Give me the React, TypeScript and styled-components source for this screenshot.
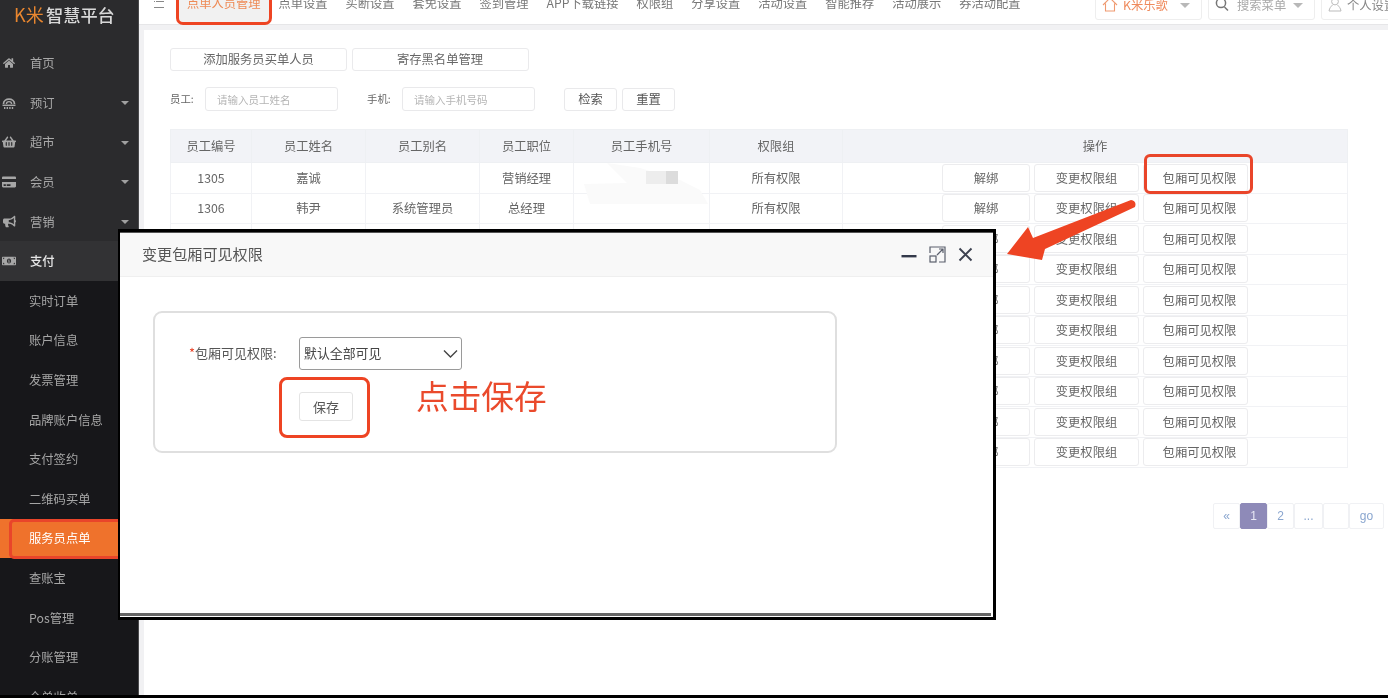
import React from "react";
import styled, { createGlobalStyle } from "styled-components";
import { FaHome, FaShoppingBasket, FaCreditCard, FaBullhorn, FaMoneyBillAlt } from "react-icons/fa";

const Global = createGlobalStyle`
  html, body { margin: 0; padding: 0; background: #fff; }
  *, *::before, *::after { box-sizing: border-box; }
`;

const CJK = `"Noto Sans CJK SC", "Liberation Sans", sans-serif`;

const Screen = styled.div`
  position: relative;
  width: 1388px;
  height: 698px;
  overflow: hidden;
  display: flex;
  background: #fff;
  font-family: ${CJK};
  font-size: 12.3px;
  color: #666;
  filter: blur(0.45px);
`;

const Bottom = styled.div`
  position: absolute;
  left: 0;
  right: 0;
  bottom: 0;
  height: 3px;
  background: #000;
`;

/* ---------- sidebar ---------- */
const Sidebar = styled.aside`
  flex: 0 0 139px;
  height: 100%;
  overflow: hidden;
  background: #2b2b2d;
  border-right: 1px solid #4a4a4c;
`;

const Logo = styled.div`
  height: 43.4px;
  padding: 1px 0 0 14px;
  display: flex;
  align-items: flex-start;
  line-height: 27px;
`;

const LogoMark = styled.span`
  color: #e8862f;
  font-size: 18px;
  font-weight: 400;
  width: 32px;
  letter-spacing: 0;
  white-space: nowrap;
`;

const LogoName = styled.span`
  color: #d8d8d8;
  font-size: 17.2px;
  font-weight: 500;
`;

const Item = styled.div<{ $open?: boolean }>`
  position: relative;
  height: 39.6px;
  display: flex;
  align-items: center;
  color: ${(p) => (p.$open ? "#e6e6e6" : "#a9a9a9")};
  background: ${(p) => (p.$open ? "#323234" : "transparent")};
  font-weight: ${(p) => (p.$open ? 500 : 400)};
`;

const ItemIcon = styled.span`
  flex: 0 0 30px;
  display: flex;
  justify-content: center;
  padding-right: 12px;
  color: #a6a6a6;
`;

const Caret = styled.i`
  position: absolute;
  right: 9px;
  top: 18px;
  border-left: 4.5px solid transparent;
  border-right: 4.5px solid transparent;
  border-top: 4.5px solid #a0a0a0;
`;

const SubMenu = styled.div`
  background: #17171a;
`;

const SubItem = styled.div<{ $active?: boolean }>`
  position: relative;
  height: 39.6px;
  padding-left: 29px;
  display: flex;
  align-items: center;
  color: ${(p) => (p.$active ? "#fff" : "#a6a6a6")};
  background: ${(p) => (p.$active ? "#ef722c" : "transparent")};
  &::after {
    content: "";
    display: ${(p) => (p.$active ? "block" : "none")};
    position: absolute;
    left: 9px;
    top: 0;
    width: 120px;
    height: 40px;
    border: 3px solid #e9452a;
    border-radius: 5px;
  }
`;

/* ---------- header ---------- */
const Main = styled.main`
  flex: 1;
  min-width: 0;
  height: 100%;
  display: flex;
  flex-direction: column;
  background: #f1f1f3;
`;

const Header = styled.header`
  flex: 0 0 25px;
  height: 25px;
  background: #fff;
  border-bottom: 1px solid #e6e6e8;
  display: flex;
  align-items: flex-start;
  padding-left: 14px;
  line-height: 20px;
  isolation: isolate;
`;

const MenuToggle = styled.svg`
  flex: 0 0 12px;
  width: 12px;
  height: 9px;
  margin: 0 22px 0 0;
`;

const Tabs = styled.nav`
  display: flex;
  gap: 18px;
  margin-top: -7px;
  font-size: 12.25px;
  color: #777;
  white-space: nowrap;
`;

const Tab = styled.span<{ $active?: boolean }>`
  position: relative;
  color: ${(p) => (p.$active ? "#ee8a55" : "#777")};
  &::before {
    content: "";
    display: ${(p) => (p.$active ? "block" : "none")};
    position: absolute;
    z-index: -1;
    left: -11px;
    right: -11px;
    top: -6px;
    bottom: -12px;
    background: #f1f1f1;
    border: 3px solid #ee4423;
    border-radius: 0 0 7px 7px;
  }
`;

const Tools = styled.div`
  margin-left: auto;
  margin-right: -20px;
  display: flex;
  gap: 6px;
  flex-shrink: 0;
  white-space: nowrap;
`;

const Tool = styled.div<{ $w: number; $tone: string }>`
  position: relative;
  width: ${(p) => p.$w}px;
  height: 31px;
  margin-top: -11px;
  padding: 7px 0 0 6px;
  border: 1px solid #eeeeee;
  border-radius: 3px;
  display: flex;
  align-items: flex-start;
  gap: 5px;
  color: ${(p) => p.$tone};
  line-height: 16px;
`;

const ToolCaret = styled.i`
  position: absolute;
  right: 11px;
  top: 13px;
  border-left: 5px solid transparent;
  border-right: 5px solid transparent;
  border-top: 5px solid #b8b8b8;
`;

const SearchGlyph = styled.svg`
  margin-right: 3px;
`;

/* ---------- content ---------- */
const Content = styled.section`
  flex: 1;
  margin: 5px 0 0 5px;
  background: #fff;
  padding: 17.5px 4px 0 26px;
`;

const ActionRow = styled.div`
  display: flex;
  gap: 4.5px;
`;

const WideButton = styled.div`
  width: 177px;
  height: 23px;
  border: 1px solid #eaeaec;
  border-radius: 3px;
  display: flex;
  align-items: center;
  justify-content: center;
  color: #666;
`;

const FilterRow = styled.div`
  display: flex;
  align-items: center;
  margin-top: 16.5px;
  height: 24px;
`;

const FilterLabel = styled.label<{ $gap?: number }>`
  margin-left: ${(p) => p.$gap ?? 0}px;
  width: 35px;
  font-size: 10.4px;
  color: #666;
  padding-bottom: 2px;
`;

const TextBox = styled.div`
  width: 133px;
  height: 24px;
  border: 1px solid #e9e9eb;
  border-radius: 3px;
  padding-left: 11px;
  font-size: 10.5px;
  color: #b5b5b5;
  display: flex;
  align-items: center;
`;

const SmallButton = styled.div<{ $gap: number }>`
  margin-left: ${(p) => p.$gap}px;
  width: 53px;
  height: 23px;
  border: 1px solid #e9e9eb;
  border-radius: 3px;
  display: flex;
  align-items: center;
  justify-content: center;
  color: #555;
`;

const Table = styled.table`
  margin-top: 18px;
  width: 1178px;
  table-layout: fixed;
  border-collapse: collapse;
  color: #666;
`;

const Th = styled.th<{ $w?: number }>`
  width: ${(p) => (p.$w ? `${p.$w}px` : "auto")};
  height: 33px;
  padding: 0;
  background: #f2f3f7;
  border: 1px solid #eef0f3;
  font-weight: 400;
  text-align: center;
`;

const Td = styled.td`
  height: 30.5px;
  padding: 0;
  border: 1px solid #f1f2f5;
  text-align: center;
`;

const Ops = styled.div`
  display: flex;
  justify-content: center;
  gap: 4px;
`;

const OpButton = styled.span<{ $w: number; $inset?: number }>`
  width: ${(p) => p.$w}px;
  height: 28px;
  padding-left: ${(p) => p.$inset ?? 0}px;
  border: 1px solid #ececee;
  border-radius: 3px;
  background: #fff;
  display: flex;
  align-items: center;
  justify-content: center;
`;

const Pager = styled.div`
  display: flex;
  justify-content: flex-end;
  margin-top: 35px;
`;

const PageItem = styled.span<{ $w: number; $on?: boolean }>`
  width: ${(p) => p.$w}px;
  height: 26px;
  border: 1px solid ${(p) => (p.$on ? "#8e8ab8" : "#f0f1f4")};
  border-radius: 2px;
  background: ${(p) => (p.$on ? "#8e8ab8" : "#fff")};
  color: ${(p) => (p.$on ? "#e8e8f4" : "#8aa6cf")};
  font-family: "Liberation Sans", sans-serif;
  font-size: 12px;
  display: flex;
  align-items: center;
  justify-content: center;
`;

/* ---------- modal ---------- */
const Modal = styled.div`
  position: absolute;
  left: 118px;
  top: 229px;
  width: 878px;
  height: 391px;
  border: solid #000;
  border-width: 3px 3px 3px 2px;
  background: #fff;
  display: flex;
  flex-direction: column;
`;

const ModalHead = styled.div`
  flex: 0 0 45px;
  background: #f8f8f8;
  border-top: 1px solid #555;
  border-bottom: 1px solid #efefef;
  padding: 0 20px 0 22px;
  display: flex;
  align-items: center;
  font-size: 15.1px;
  color: #555;
`;

const ModalTitle = styled.span`
  margin-top: -3px;
`;

const ModalTools = styled.div`
  margin-left: auto;
  display: flex;
  align-items: center;
  gap: 12px;
  color: #33394a;
`;

const ModalBody = styled.div`
  flex: 1;
  padding: 34px 0 0 33px;
`;

const Card = styled.div`
  width: 684px;
  height: 142px;
  border: 2px solid #dfdfdf;
  border-radius: 9px;
  padding-top: 24px;
`;

const FieldRow = styled.div`
  display: flex;
  align-items: center;
  padding-left: 34px;
  font-size: 13px;
  color: #555;
`;

const FieldLabel = styled.span`
  width: 110px;
  margin-top: -2px;
  b {
    color: #e9452a;
    font-weight: 400;
  }
`;

const Picker = styled.div`
  width: 163px;
  height: 33px;
  border: 1px solid #9a9a9a;
  border-radius: 3px;
  padding: 0 2px 0 4px;
  display: flex;
  align-items: center;
  justify-content: space-between;
  color: #444;
`;

const PickerText = styled.span`
  font-size: 12.9px;
  margin-top: -2px;
`;

const SaveRow = styled.div`
  display: flex;
  align-items: flex-start;
  margin: 7px 0 0 124px;
`;

const SaveBox = styled.div`
  width: 91px;
  height: 61px;
  border: 3.5px solid #ee4423;
  border-radius: 8px;
  padding: 0 0 3px 3px;
  display: flex;
  align-items: center;
  justify-content: center;
`;

const SaveButton = styled.div`
  width: 54px;
  height: 29px;
  border: 1px solid #e4e4e4;
  border-radius: 3px;
  display: flex;
  align-items: center;
  justify-content: center;
  color: #555;
  font-size: 13px;
`;

const SaveHint = styled.div`
  margin: -6px 0 0 46px;
  font-size: 32.7px;
  line-height: 48px;
  font-weight: 400;
  color: #ea4a2c;
  white-space: nowrap;
`;

const ModalFoot = styled.div`
  flex: 0 0 3px;
  margin: 0 2px 1px 0;
  background: #666;
`;

/* ---------- annotations ---------- */
const Callout = styled.div`
  position: absolute;
  left: 1144px;
  top: 154px;
  width: 109px;
  height: 40px;
  border: 3px solid #e9452a;
  border-radius: 6px;
`;

const Overlay = styled.svg`
  position: absolute;
  left: 0;
  top: 0;
  pointer-events: none;
`;

/* ---------- data ---------- */
const Reserve = () => (
  <svg width="14" height="14" viewBox="0 0 14 14" fill="none" stroke="currentColor">
    <path d="M1.5 8 C1.5 1.6 12.5 1.6 12.5 8" strokeWidth="1.7" />
    <path d="M4.4 8 C4.4 4.8 9.6 4.8 9.6 8" strokeWidth="1.4" />
    <path d="M0.5 9.3 H13.5" strokeWidth="1.5" />
    <path d="M2 12 H12" strokeWidth="1.8" strokeDasharray="1.4 1.2" />
  </svg>
);

const top = [
  { t: "首页", icon: <FaHome size={12} /> },
  { t: "预订", icon: <Reserve />, caret: true },
  { t: "超市", icon: <FaShoppingBasket size={14} />, caret: true },
  { t: "会员", icon: <FaCreditCard size={14} />, caret: true },
  { t: "营销", icon: <FaBullhorn size={13} />, caret: true },
];
const subs = ["实时订单", "账户信息", "发票管理", "品牌账户信息", "支付签约", "二维码买单", "服务员点单", "查账宝", "Pos管理", "分账管理", "全单收单"];
const tabs = ["点单人员管理", "点单设置", "买断设置", "套免设置", "签到管理", "APP下载链接", "权限组", "分享设置", "活动设置", "智能推荐", "活动展示", "券活动配置"];
const heads: [string, number?][] = [["员工编号", 81], ["员工姓名", 114], ["员工别名", 114], ["员工职位", 94], ["员工手机号", 136], ["权限组", 133], ["操作"]];
const rows = [
  ["1305", "嘉诚", "", "营销经理", "", "所有权限"],
  ["1306", "韩尹", "系统管理员", "总经理", "", "所有权限"],
  ...Array.from({ length: 8 }, () => ["", "", "", "", "", ""]),
];
const pages: [string, number, boolean?][] = [["«", 27], ["1", 27, true], ["2", 27], ["...", 29], ["", 26], ["go", 35]];

export default function App() {
  return (
    <Screen>
      <Global />
      <Sidebar>
        <Logo>
          <LogoMark>K米</LogoMark>
          <LogoName>智慧平台</LogoName>
        </Logo>
        {top.map((m) => (
          <Item key={m.t}>
            <ItemIcon>{m.icon}</ItemIcon>
            {m.t}
            {m.caret && <Caret />}
          </Item>
        ))}
        <Item $open>
          <ItemIcon><FaMoneyBillAlt size={14} /></ItemIcon>
          支付
        </Item>
        <SubMenu>
          {subs.map((s) => (
            <SubItem key={s} $active={s === "服务员点单"}>{s}</SubItem>
          ))}
        </SubMenu>
      </Sidebar>

      <Main>
        <Header>
          <MenuToggle viewBox="0 0 12 9" fill="none" stroke="#888" strokeWidth="1.1">
            <path d="M3 1.5 H11 M1 1.5 H2 M1 7.5 H11" />
          </MenuToggle>
          <Tabs>
            {tabs.map((t, i) => (
              <Tab key={t} $active={i === 0}>{t}</Tab>
            ))}
          </Tabs>
          <Tools>
            <Tool $w={107} $tone="#ef8a5c">
              <svg width="16" height="15" viewBox="0 0 16 15" fill="none" stroke="#ef9a70" strokeWidth="1.1">
                <path d="M1 8 L8 1 L15 8 M3.5 6.5 V14 H12.5 V6.5" />
              </svg>
              K米乐歌
              <ToolCaret />
            </Tool>
            <Tool $w={107} $tone="#aaaaaa">
              <SearchGlyph width="14" height="15" viewBox="0 0 14 15" fill="none" stroke="#777" strokeWidth="1.5">
                <circle cx="6" cy="6" r="4.6" />
                <path d="M9.5 10 L13 13.5" />
              </SearchGlyph>
              搜索菜单
              <ToolCaret />
            </Tool>
            <Tool $w={87} $tone="#888888">
              <svg width="14" height="15" viewBox="0 0 14 15" fill="none" stroke="#bbb" strokeWidth="1">
                <circle cx="7" cy="4.5" r="3.4" />
                <path d="M4.5 8 C3 9.5 1.5 11 1 14 H13 C12.5 11 11 9.5 9.5 8" />
              </svg>
              个人设置
            </Tool>
          </Tools>
        </Header>

        <Content>
          <ActionRow>
            <WideButton>添加服务员买单人员</WideButton>
            <WideButton>寄存黑名单管理</WideButton>
          </ActionRow>
          <FilterRow>
            <FilterLabel>员工:</FilterLabel>
            <TextBox>请输入员工姓名</TextBox>
            <FilterLabel $gap={29}>手机:</FilterLabel>
            <TextBox>请输入手机号码</TextBox>
            <SmallButton $gap={29}>检索</SmallButton>
            <SmallButton $gap={5}>重置</SmallButton>
          </FilterRow>
          <Table>
            <thead>
              <tr>
                {heads.map(([h, w]) => (
                  <Th key={h} $w={w}>{h}</Th>
                ))}
              </tr>
            </thead>
            <tbody>
              {rows.map((r, i) => (
                <tr key={i}>
                  {r.map((c, j) => (
                    <Td key={j}>{c}</Td>
                  ))}
                  <Td>
                    <Ops>
                      <OpButton $w={88}>解绑</OpButton>
                      <OpButton $w={105}>变更权限组</OpButton>
                      <OpButton $w={105} $inset={8}>包厢可见权限</OpButton>
                    </Ops>
                  </Td>
                </tr>
              ))}
            </tbody>
          </Table>
          <Pager>
            {pages.map(([p, w, on], i) => (
              <PageItem key={i} $w={w} $on={on}>{p}</PageItem>
            ))}
          </Pager>
        </Content>
      </Main>

      <Overlay width="1388" height="698" viewBox="0 0 1388 698">
        <path d="M607 163 L640 168 L680 180 L700 190 L708 204 L590 204 L584 184 L627 183 Z" fill="#fafafa" />
        <rect x="646" y="171" width="20" height="13" fill="#ededed" />
        <rect x="666" y="171" width="12" height="13" fill="#dcdcdc" />
        <path
          d="M1131 200 Q1137 201 1135 207 L1045 249 L1042 260 L1007 254 L1028 227 L1033 238 Z"
          fill="#ee4423"
        />
      </Overlay>
      <Callout />

      <Modal>
        <ModalHead>
          <ModalTitle>变更包厢可见权限</ModalTitle>
          <ModalTools>
            <svg width="16" height="16" viewBox="0 0 16 16">
              <rect x="0.5" y="8" width="15" height="2.4" fill="#33394a" />
            </svg>
            <svg width="17" height="17" viewBox="0 0 17 17" fill="none" stroke="#5a5f6c" strokeWidth="1.2">
              <path d="M1 7 V1 H16 V16 H10" />
              <rect x="1" y="10" width="6" height="6" />
              <path d="M8 9 L14 3 M10 3 H14 V7" />
            </svg>
            <svg width="15" height="15" viewBox="0 0 15 15" stroke="#3c4150" strokeWidth="1.9">
              <path d="M1.5 1.5 L13.5 13.5 M13.5 1.5 L1.5 13.5" />
            </svg>
          </ModalTools>
        </ModalHead>
        <ModalBody>
          <Card>
            <FieldRow>
              <FieldLabel><b>*</b>包厢可见权限:</FieldLabel>
              <Picker>
                <PickerText>默认全部可见</PickerText>
                <svg width="17" height="10" viewBox="0 0 17 10" fill="none" stroke="#444" strokeWidth="1.4">
                  <path d="M2 1.5 L8.5 8 L15 1.5" />
                </svg>
              </Picker>
            </FieldRow>
            <SaveRow>
              <SaveBox>
                <SaveButton>保存</SaveButton>
              </SaveBox>
              <SaveHint>点击保存</SaveHint>
            </SaveRow>
          </Card>
        </ModalBody>
        <ModalFoot />
      </Modal>
      <Bottom />
    </Screen>
  );
}
